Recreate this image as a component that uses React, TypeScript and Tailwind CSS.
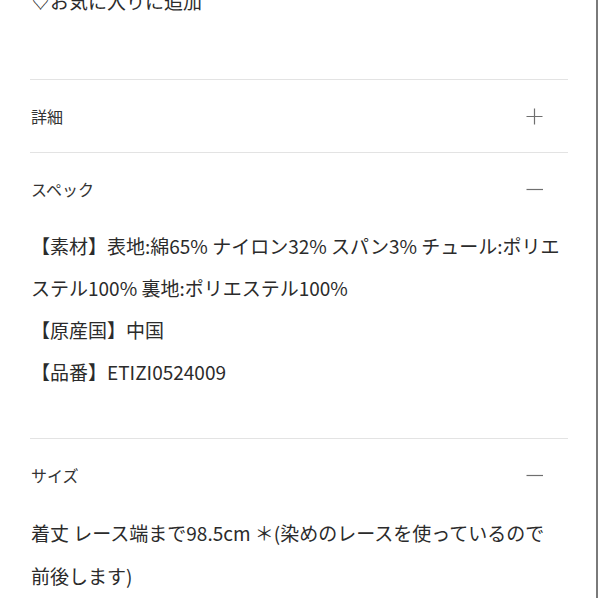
import React from "react";

const Plus = () => (
  <svg width="17" height="17" viewBox="0 0 17 17" className="block">
    <path d="M8.5 0.5v16M0.5 8.5h16" stroke="#6f6f6f" strokeWidth="1.2" fill="none" />
  </svg>
);

const Minus = () => (
  <svg width="17" height="17" viewBox="0 0 17 17" className="block">
    <path d="M0.5 8.5h17" stroke="#6f6f6f" strokeWidth="1.2" fill="none" />
  </svg>
);

const Header = ({ title, open }: { title: string; open: boolean }) => (
  <div className="h-[72px] flex items-center justify-between pl-[1px] pr-[25px]">
    <span className="text-[16px] text-[#333]">{title}</span>
    {open ? <Minus /> : <Plus />}
  </div>
);

export default function App() {
  return (
    <div
      className="w-[598px] h-[598px] overflow-hidden bg-white border-r-2 border-[#7a7a7a] text-[#2b2b2b]"
      style={{ fontFamily: '"Noto Sans CJK JP", "Noto Sans", sans-serif' }}
    >
      <div className="ml-[30px] w-[538px]">
        <div className="h-[79px] flex flex-col">
          <p className="-mt-[11px] leading-[24px] text-[19px] pl-[1px] whitespace-nowrap">♡お気に入りに追加</p>
        </div>
        <section className="border-t border-[#e3e3e3]">
          <Header title="詳細" open={false} />
        </section>
        <section className="border-t border-[#e3e3e3] pb-[45px]">
          <Header title="スペック" open={true} />
          <div className="text-[19px] leading-[42px] pl-[1px] whitespace-nowrap">
            <p>【素材】表地:綿65% ナイロン32% スパン3% チュール:ポリエ</p>
            <p>ステル100% 裏地:ポリエステル100%</p>
            <p>【原産国】中国</p>
            <p>【品番】ETIZI0524009</p>
          </div>
        </section>
        <section className="border-t border-[#e3e3e3]">
          <Header title="サイズ" open={true} />
          <div className="text-[19px] leading-[43px] pl-[1px] whitespace-nowrap">
            <p>着丈 レース端まで98.5cm ＊(染めのレースを使っているので</p>
            <p>前後します)</p>
          </div>
        </section>
      </div>
    </div>
  );
}
